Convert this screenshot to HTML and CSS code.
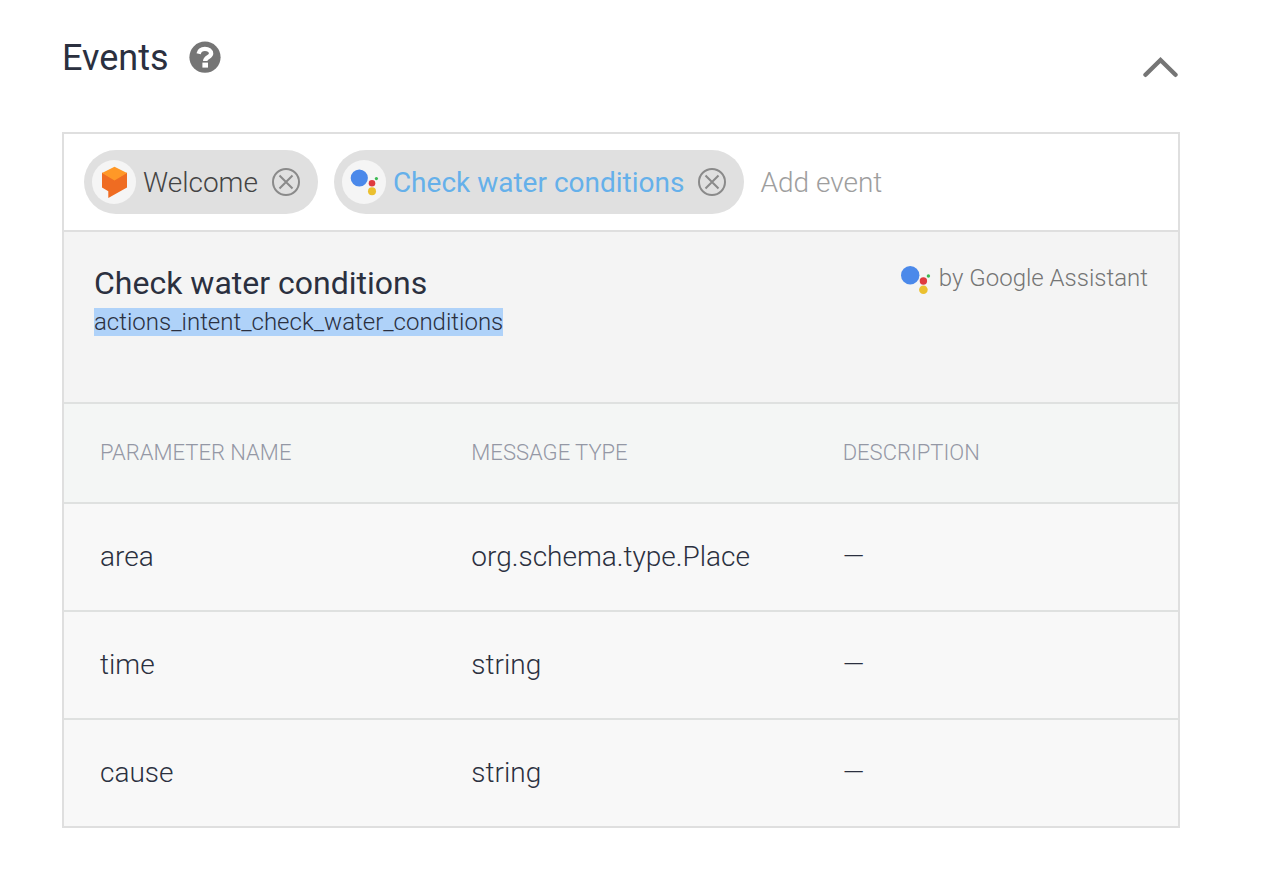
FILE: index.html
```html
<!DOCTYPE html>
<html lang="en">
<head>
<meta charset="utf-8">
<title>Events</title>
<link rel="stylesheet" href="styles.css">
</head>
<body>
<main class="events">
  <header class="events-header">
    <h1 class="events-title">Events</h1>
    <button class="icon-button help" type="button" aria-label="Help">
      <svg width="32" height="32" viewBox="0 0 32 32" aria-hidden="true">
        <circle cx="16" cy="16.200" r="15.6" fill="#757575"/>
        <path d="M9.600 12.700C10.300 9.600 12.600 7.900 15.900 7.900c3.700 0 6.200 1.800 6.200 4.700 0 3.600-5.900 3.600-5.900 7.400" fill="none" stroke="#fff" stroke-width="4.400"/>
        <rect x="13.400" y="21.600" width="5.600" height="5" fill="#fff"/>
      </svg>
    </button>
    <button class="icon-button collapse" type="button" aria-label="Collapse">
      <svg width="36" height="22" viewBox="0 0 36 22" aria-hidden="true">
        <path d="M3.500 18.800 18.500 4l15 14.800" fill="none" stroke="#757575" stroke-width="4.400" stroke-linecap="round"/>
      </svg>
    </button>
  </header>

  <section class="panel">
    <div class="chips">
      <div class="chip">
        <svg class="avatar" width="44" height="44" viewBox="0 0 44 44" aria-hidden="true">
          <path d="M10 12.500 22.500 19.500 35 12.500V27.500L16.300 38V31.200L10 27.500Z" fill="#ef6c22"/>
          <path d="M22.500 6.700 35 13 22.500 20.400 10 13Z" fill="#ff9827"/>
        </svg>
        <span class="chip-label">Welcome</span>
        <button class="icon-button" type="button" aria-label="Remove Welcome">
          <svg width="28" height="28" viewBox="0 0 28 28" fill="none" stroke="#8a8a8a" stroke-width="2" aria-hidden="true">
            <circle cx="14" cy="14" r="13"/><path d="m7.500 7.500 13 13m0-13-13 13"/>
          </svg>
        </button>
      </div>
      <div class="chip chip-active">
        <svg class="avatar" width="44" height="44" viewBox="0 0 44 44" aria-hidden="true">
          <circle cx="17.300" cy="18" r="8.600" fill="#4b89ea"/><circle cx="30" cy="23.300" r="3.300" fill="#df3b3f"/>
          <circle cx="30" cy="31.300" r="4" fill="#ebc02f"/><circle cx="34.400" cy="18.600" r="1.600" fill="#3cba54"/>
        </svg>
        <span class="chip-label">Check water conditions</span>
        <button class="icon-button" type="button" aria-label="Remove Check water conditions">
          <svg width="28" height="28" viewBox="0 0 28 28" fill="none" stroke="#8a8a8a" stroke-width="2" aria-hidden="true">
            <circle cx="14" cy="14" r="13"/><path d="m7.500 7.500 13 13m0-13-13 13"/>
          </svg>
        </button>
      </div>
      <input class="add-event" type="text" placeholder="Add event" aria-label="Add event">
    </div>

    <div class="details">
      <div>
        <h2 class="details-title">Check water conditions</h2>
        <mark class="details-id">actions_intent_check_water_conditions</mark>
      </div>
      <div class="provider">
        <svg width="30" height="30" viewBox="0 0 30 30" aria-hidden="true">
          <circle cx="9.200" cy="11.300" r="9.200" fill="#4b89ea"/><circle cx="22.400" cy="17" r="3.700" fill="#df3b3f"/>
          <circle cx="22.400" cy="25.700" r="4.300" fill="#ebc02f"/><circle cx="27.400" cy="12" r="1.700" fill="#3cba54"/>
        </svg>
        <span>by Google Assistant</span>
      </div>
    </div>

    <table class="params">
      <thead>
        <tr><th scope="col">PARAMETER NAME</th><th scope="col">MESSAGE TYPE</th><th scope="col">DESCRIPTION</th></tr>
      </thead>
      <tbody>
        <tr><td>area</td><td>org.schema.type.Place</td><td>—</td></tr>
        <tr><td>time</td><td>string</td><td>—</td></tr>
        <tr><td>cause</td><td>string</td><td>—</td></tr>
      </tbody>
    </table>
  </section>
</main>
</body>
</html>
```
FILE: styles.css
```css
* { box-sizing: border-box; }

body {
  margin: 0;
  background: #fff;
  color: #2b303f;
  font-family: Roboto, "Liberation Sans", sans-serif;
  font-weight: 300;
}

.events { padding: 36px 108px 44px 62px; }

.events-header {
  display: flex;
  align-items: flex-start;
  height: 96px;
}

.events-title {
  margin: 0;
  font-size: 36px;
  line-height: 44px;
  font-weight: 400;
}

.icon-button {
  display: flex;
  padding: 0;
  border: 0;
  background: none;
  cursor: pointer;
}

.help { margin: 5px 0 0 20px; }
.collapse { margin: 20px 2px 0 auto; }

.panel { border: 2px solid #dfdfdf; }

.chips {
  display: flex;
  align-items: center;
  gap: 16px;
  padding: 16px 20px;
}

.chip {
  display: flex;
  align-items: center;
  flex: none;
  height: 64px;
  padding: 0 18px 0 8px;
  border-radius: 32px;
  background: #e0e0e0;
  color: #444;
  font-size: 28px;
  line-height: 36px;
}

.chip-label {
  margin: 0 14px 0 7px;
  padding-top: 2px;
}

.chip-active {
  color: #65b0ea;
  font-weight: 400;
}

.avatar {
  border-radius: 50%;
  background: #f5f5f5;
}

.add-event {
  flex: 1;
  min-width: 0;
  padding: 2px 0 0;
  border: 0;
  outline: 0;
  background: none;
  color: #444;
  font: inherit;
  font-size: 28px;
  line-height: 36px;
}

.add-event::placeholder { color: #9e9e9e; opacity: 1; }

.details {
  display: flex;
  justify-content: space-between;
  align-items: flex-start;
  padding: 30px 30px 66px;
  border-top: 2px solid #dfdfdf;
  background: #f4f4f4;
}

.details-title {
  margin: 0 0 4px;
  font-size: 32px;
  line-height: 42px;
  font-weight: 400;
}

.details-id {
  display: block;
  width: fit-content;
  background: #afd2f9;
  color: inherit;
  font-size: 24px;
  line-height: 28px;
}

.provider {
  display: flex;
  align-items: flex-end;
  gap: 8px;
  color: #757575;
  font-size: 24px;
  line-height: 32px;
}

.params {
  width: 100%;
  table-layout: fixed;
  border-collapse: separate;
  border-spacing: 0;
}

.params th,
.params td {
  padding: 0 0 2px 36px;
  border-top: 2px solid #dfe1e0;
  text-align: left;
  font-weight: 300;
}

.params th {
  height: 100px;
  background: #f4f6f5;
  color: #9498a5;
  font-size: 22px;
}

.params td {
  height: 108px;
  background: #f8f8f8;
  font-size: 28px;
}
```
